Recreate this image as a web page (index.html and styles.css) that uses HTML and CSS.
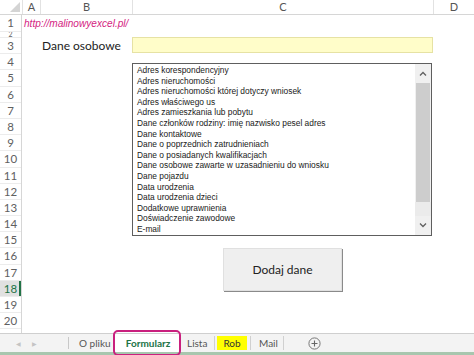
FILE: index.html
```html
<!DOCTYPE html>
<html lang="pl">
<head>
  <meta charset="UTF-8" />
  <title>Formularz</title>
  <link rel="stylesheet" href="styles.css">
</head>
<body>
  <div class="sheet">
    <div class="colheads">
      <div class="corner"><span class="tri"></span></div>
      <div class="colhead">A</div>
      <div class="colhead">B</div>
      <div class="colhead">C</div>
      <div class="colhead">D</div>
    </div>

    <div class="area">
      <div class="rowheads">
        <div class="rh first">1</div>
        <div class="rh thin">2</div>
        <div class="rh">3</div>
        <div class="rh">4</div>
        <div class="rh">5</div>
        <div class="rh">6</div>
        <div class="rh">7</div>
        <div class="rh">8</div>
        <div class="rh">9</div>
        <div class="rh">10</div>
        <div class="rh">11</div>
        <div class="rh">12</div>
        <div class="rh">13</div>
        <div class="rh">14</div>
        <div class="rh">15</div>
        <div class="rh">16</div>
        <div class="rh">17</div>
        <div class="rh selected">18</div>
        <div class="rh">19</div>
        <div class="rh">20</div>
        <div class="rh">21</div>
      </div>

      <div class="cells">
        <a class="link" href="#">http://malinowyexcel.pl/</a>
        <div class="label">Dane osobowe</div>
        <div class="input"></div>

        <div class="listbox">
          <ul class="items">
            <li>Adres korespondencyjny</li>
            <li>Adres nieruchomości</li>
            <li>Adres nieruchomości której dotyczy wniosek</li>
            <li>Adres właściwego us</li>
            <li>Adres zamieszkania lub pobytu</li>
            <li>Dane członków rodziny: imię nazwisko pesel adres</li>
            <li>Dane kontaktowe</li>
            <li>Dane o poprzednich zatrudnieniach</li>
            <li>Dane o posiadanych kwalifikacjach</li>
            <li>Dane osobowe zawarte w uzasadnieniu do wniosku</li>
            <li>Dane pojazdu</li>
            <li>Data urodzenia</li>
            <li>Data urodzenia dzieci</li>
            <li>Dodatkowe uprawnienia</li>
            <li>Doświadczenie zawodowe</li>
            <li>E-mail</li>
          </ul>
          <div class="scrollbar">
            <div class="arrow">
              <svg width="8" height="5" viewBox="0 0 8 5"><path d="M1 4.5 L4 1.5 L7 4.5" fill="none" stroke="#606060" stroke-width="1.3"/></svg>
            </div>
            <div class="thumb"></div>
            <div class="track"></div>
            <div class="arrow">
              <svg width="8" height="5" viewBox="0 0 8 5"><path d="M1 0.5 L4 3.5 L7 0.5" fill="none" stroke="#606060" stroke-width="1.3"/></svg>
            </div>
          </div>
        </div>

        <button class="btn">Dodaj dane</button>
      </div>
    </div>
  </div>

  <div class="tabs">
    <div class="nav">
      <span class="navarrow">&#9664;</span>
      <span class="navarrow">&#9654;</span>
    </div>
    <div class="tab first">O pliku</div>
    <div class="tab active">Formularz</div>
    <div class="tab lista">Lista</div>
    <div class="tab yellow">Rob</div>
    <div class="tab mail">Mail</div>
    <div class="add">
      <svg width="13" height="13" viewBox="0 0 13 13"><circle cx="6.5" cy="6.5" r="5.6" fill="none" stroke="#777" stroke-width="1"/><path d="M6.5 3.5 V9.5 M3.5 6.5 H9.5" stroke="#666" stroke-width="1.1"/></svg>
    </div>
  </div>
  <div class="status"></div>
</body>
</html>
```

FILE: styles.css
```css
* {
  box-sizing: border-box;
  margin: 0;
  padding: 0;
}

body {
  width: 474px;
  height: 355px;
  overflow: hidden;
  display: flex;
  flex-direction: column;
  background: #fff;
  font-family: Lato, 'Liberation Sans', sans-serif;
  color: #222;
}

.sheet {
  flex: 1;
  overflow: hidden;
  display: flex;
  flex-direction: column;
}

/* column headers */
.colheads {
  display: grid;
  grid-template-columns: 22px 18px 92px 301px 1fr;
  height: 15px;
  border-bottom: 1px solid #d6d6d6;
  flex-shrink: 0;
}

.colhead {
  font-size: 11px;
  color: #555;
  text-align: center;
  line-height: 14px;
  border-left: 1px solid #e2e2e2;
}

.corner {
  display: flex;
  align-items: flex-end;
  justify-content: flex-end;
  padding: 0 2px 2px 0;
}

.tri {
  width: 0;
  height: 0;
  border-left: 10px solid transparent;
  border-bottom: 10px solid #d4d4d4;
}

/* body */
.area {
  flex: 1;
  display: flex;
  overflow: hidden;
}

.rowheads {
  width: 22px;
  flex-shrink: 0;
  border-right: 1px solid #d6d6d6;
}

.rh {
  height: 16.2px;
  font-size: 11.5px;
  color: #606060;
  text-align: center;
  line-height: 16px;
  border-bottom: 1px solid #ececec;
}

.rh.first {
  height: 17px;
}

.rh.thin {
  height: 6px;
  line-height: 4px;
  overflow: hidden;
  font-size: 7px;
}

.rh.selected {
  background: #e1e1e1;
  color: #217346;
  box-shadow: inset -2px 0 0 #217346;
}

.cells {
  flex: 1;
  display: grid;
  grid-template-columns: 18px 92px 301px 1fr;
  grid-template-rows: 17px 6px 16px auto auto;
  align-content: start;
}

.link {
  grid-column: 1 / 4;
  grid-row: 1;
  padding-left: 2px;
  font-family: 'Liberation Sans', sans-serif;
  font-style: italic;
  font-size: 10.1px;
  line-height: 17px;
  color: #d4237f;
  text-decoration: none;
}

.label {
  grid-column: 2;
  grid-row: 3;
  padding-left: 2px;
  font-size: 12px;
  line-height: 16px;
  color: #222;
}

.input {
  grid-column: 3;
  grid-row: 3;
  height: 16px;
  margin-top: -1px;
  background: #fffdc9;
  border: 1px solid #e6e2a4;
}

/* list box */
.listbox {
  grid-column: 3;
  grid-row: 4;
  margin-top: 9px;
  width: 300px;
  height: 173px;
  border: 1px solid #5e5e5e;
  display: flex;
  background: #fff;
}

.items {
  flex: 1;
  list-style: none;
  padding: 1px 0 0 4px;
  font-family: 'Liberation Sans', sans-serif;
  font-size: 8.4px;
  line-height: 10.6px;
  color: #1a1a1a;
  white-space: nowrap;
  overflow: hidden;
}

.scrollbar {
  width: 16px;
  display: flex;
  flex-direction: column;
  background: #f0f0f0;
}

.arrow {
  height: 19px;
  display: flex;
  align-items: center;
  justify-content: center;
  background: #f0f0f0;
}

.thumb {
  height: 119px;
  margin: 0 1px;
  background: #cdcdcd;
}

.track {
  flex: 1;
  background: #ebebeb;
}

/* button */
.btn {
  grid-column: 3;
  grid-row: 5;
  margin: 12px 0 0 91px;
  width: 119px;
  height: 43px;
  background: #efefef;
  border: 1px solid #e0e0e0;
  box-shadow: 1px 1px 0 #8a8a8a;
  font-family: Lato, 'Liberation Sans', sans-serif;
  font-size: 12px;
  color: #222;
}

/* sheet tabs */
.tabs {
  height: 19px;
  flex-shrink: 0;
  display: flex;
  align-items: stretch;
  background: #f3f3f3;
  border-top: 1px solid #cfcfcf;
  font-size: 10px;
  color: #555;
}

.nav {
  width: 69px;
  display: flex;
  align-items: center;
  gap: 11px;
  padding-left: 16px;
  border-right: 1px solid #c8c8c8;
  margin: 3px 0;
}

.navarrow {
  font-size: 6px;
  color: #c4c4c4;
}

.tab {
  display: flex;
  align-items: center;
  margin: 2px 0;
}

.tab.first {
  width: 44px;
  padding-left: 10px;
}

.tab.active {
  width: 68px;
  margin: 0;
  justify-content: center;
  padding-left: 2px;
  background: #fff;
  color: #217346;
  font-weight: bold;
  position: relative;
}

.tab.active::after {
  content: "";
  position: absolute;
  left: 0;
  right: 0;
  top: -4px;
  bottom: -4px;
  border: 2.5px solid #c9207e;
  border-radius: 5px;
}

.tab.lista {
  width: 34px;
  padding-left: 6px;
  border-right: 1px solid #d0d0d0;
}

.tab.yellow {
  width: 30px;
  margin: 2px 3px 2px 2px;
  justify-content: center;
  background: #ffff00;
  color: #333;
}

.tab.mail {
  width: 34px;
  padding-left: 8px;
  border-left: 1px solid #d0d0d0;
  border-right: 1px solid #d0d0d0;
}

.add {
  display: flex;
  align-items: center;
  padding-left: 24px;
}

.status {
  height: 3px;
  flex-shrink: 0;
  background: #a8c6ae;
}
```
